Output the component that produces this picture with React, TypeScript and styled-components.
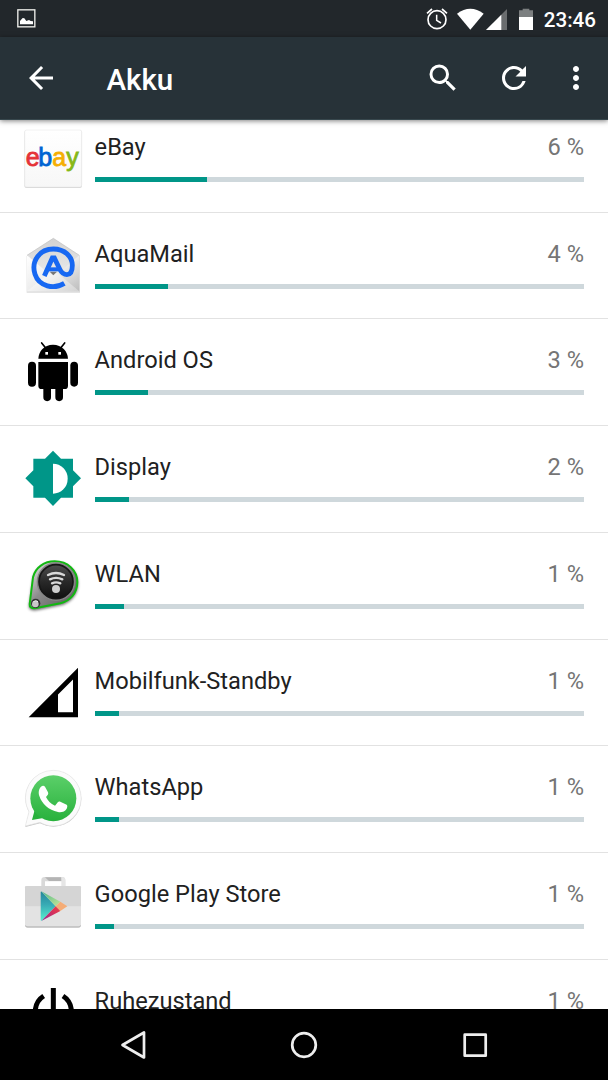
import type { ReactNode } from 'react';
import styled, { createGlobalStyle } from 'styled-components';
import { MdArrowBack, MdMoreVert, MdRefresh, MdSearch } from 'react-icons/md';

const GlobalStyle = createGlobalStyle`
  * {
    box-sizing: border-box;
  }
  body {
    margin: 0;
    background-color: #ffffff;
    font-family: Roboto, 'Liberation Sans', sans-serif;
  }
`;
const Container = styled.div`
  display: flex;
  flex-direction: column;
  width: 608px;
  height: 1080px;
  overflow: hidden;
  background-color: #ffffff;
`;
const StatusBar = styled.div`
  display: flex;
  align-items: center;
  flex-shrink: 0;
  height: 37px;
  padding: 0 12px 0 17px;
  background-color: #22272b;
  svg {
    display: block;
    flex-shrink: 0;
  }
`;
const StatusGroup = styled.div`
  display: flex;
  align-items: center;
  margin-left: auto;
`;
const AlarmIcon = styled.svg`
  width: 22px;
  height: 22px;
  margin-right: 9px;
`;
const Clock = styled.span`
  margin-left: 10px;
  padding-top: 2px;
  color: #ffffff;
  font-size: 20.6px;
  font-weight: 500;
  line-height: 24px;
`;
const AppBar = styled.header`
  position: relative;
  z-index: 1;
  display: flex;
  align-items: center;
  flex-shrink: 0;
  height: 83px;
  padding: 0 14.5px 0 23.4px;
  background-color: #273238;
  border-bottom: 1px solid #37474d;
  box-shadow: 0 1px 5px rgba(0, 0, 0, 0.5);
  color: #ffffff;
`;
const Title = styled.h1`
  flex: 1;
  margin: 3px 0 0 47.1px;
  font-size: 29.5px;
  font-weight: 500;
  line-height: 36px;
`;
const BarButton = styled.button<{ $space?: number }>`
  display: flex;
  align-items: center;
  justify-content: center;
  width: 36px;
  height: 36px;
  margin-left: ${(props) => props.$space || 0}px;
  padding: 0;
  border: 0;
  background: none;
  color: inherit;
  font-size: 36px;
`;
const List = styled.main`
  flex: 1;
  min-height: 0;
  overflow: hidden;
`;
const Rows = styled.ul`
  margin: -14.1px 0 0;
  padding: 0;
  list-style: none;
`;
const Row = styled.li`
  display: flex;
  align-items: center;
  gap: 12.6px;
  height: 106.75px;
  padding: 0 24px;
  border-bottom: 1px solid #e2e2e2;
`;
const AppIcon = styled.svg`
  display: block;
  flex-shrink: 0;
  width: 58px;
  height: 58px;
  overflow: visible;
`;
const Usage = styled.div`
  flex: 1;
  align-self: flex-start;
  padding-top: 27px;
`;
const UsageText = styled.div`
  display: flex;
  justify-content: space-between;
  height: 44px;
  font-size: 23.65px;
  line-height: 28px;
`;
const Name = styled.span`
  color: #212121;
`;
const Percent = styled.span`
  color: #757575;
`;
const Track = styled.div`
  height: 5px;
  background-color: #cfd8dc;
`;
const Fill = styled.div<{ $value: number }>`
  width: ${(props) => props.$value}%;
  height: 100%;
  background-color: #009688;
`;
const NavBar = styled.nav`
  display: flex;
  align-items: center;
  justify-content: center;
  gap: 141px;
  flex-shrink: 0;
  height: 71px;
  background-color: #000000;
`;
const NavIcon = styled.svg`
  display: block;
  width: 30px;
  height: 30px;
  fill: none;
  stroke: #eeeeee;
  stroke-width: 2.7;
  stroke-linejoin: round;
`;

const EbayIcon = () => (
  <AppIcon viewBox='42 30 174 174'>
    <defs>
      <linearGradient id='ebayBg' x1='0' y1='0' x2='0' y2='1'>
        <stop offset='0' stopColor='#ffffff' />
        <stop offset='1' stopColor='#f7f7f7' />
      </linearGradient>
    </defs>
    <rect x='43' y='31' width='173' height='173' rx='7' fill='#d4d4d4' />
    <rect x='44' y='30' width='171' height='171' rx='6' fill='url(#ebayBg)' stroke='#ececec' strokeWidth='2' />
    <text y='138' fontFamily='Liberation Sans, sans-serif' fontSize='75' strokeWidth='2.400'>
      <tspan x='47' fill='#e53238' stroke='#e53238'>e</tspan>
      <tspan x='85' fill='#0064d2' stroke='#0064d2'>b</tspan>
      <tspan x='127' fill='#f5af02' stroke='#f5af02'>a</tspan>
      <tspan x='169' fill='#86b817' stroke='#86b817'>y</tspan>
    </text>
  </AppIcon>
);

const AquaMailIcon = () => (
  <AppIcon viewBox='42 35 174 174'>
    <defs>
      <linearGradient id='aquaInside' x1='0' y1='0' x2='0' y2='1'>
        <stop offset='0' stopColor='#d2d2d2' />
        <stop offset='1' stopColor='#f4f4f4' />
      </linearGradient>
      <linearGradient id='aquaBody' x1='0' y1='0' x2='1' y2='1'>
        <stop offset='0' stopColor='#ffffff' />
        <stop offset='0.5' stopColor='#ededed' />
        <stop offset='1' stopColor='#bcbcbc' />
      </linearGradient>
    </defs>
    <path d='M50 92 130 40l80 52v110H50Z' fill='#cccccc' opacity='.7' />
    <path d='M51 90 130 39l78 51v108H51Z' fill='url(#aquaInside)' />
    <path d='M51 90l66 55q13 11 26 0l65-55v108H51Z' fill='url(#aquaBody)' />
    <path d='M51 198l66-54q13-9 26 0l65 54Z' fill='#ffffff' opacity='.35' />
    <path d='M119 139l11 11 11-11Z' fill='#777777' />
    <path d='M51 90 130 39l78 51' fill='none' stroke='#c3c3c3' strokeWidth='2' />
    <g fill='none' stroke='#1768f2' strokeWidth='14.500'>
      <path d='M163 174C132 193 87 184 75 147 62 105 91 71 130 71c34 0 57 23 57 49 0 17-5 28-16 28-10 0-16-5-22-17L133 98h-6l-24 54' />
      <path d='M109 132h40' strokeWidth='12' />
    </g>
  </AppIcon>
);

const AndroidIcon = () => (
  <AppIcon viewBox='42 40 174 174'>
    <path d='M85 87c1-22 17-42 44-42s44 20 45 42Z' />
    <path d='M95 40l12 15M164 40l-12 15' stroke='#000000' strokeWidth='5' strokeLinecap='round' />
    <rect x='106' y='67' width='8' height='8' fill='#ffffff' />
    <rect x='145' y='67' width='8' height='8' fill='#ffffff' />
    <path d='M85 97h89v71q0 10-10 10H95q-10 0-10-10Z' />
    <rect x='54' y='96' width='24' height='75' rx='12' />
    <rect x='181' y='96' width='23' height='75' rx='11.5' />
    <path d='M100 170h23v33a11.500 11.500 0 0 1-23 0ZM136 170h23v33a11.500 11.500 0 0 1-23 0Z' />
  </AppIcon>
);

const DisplayIcon = () => (
  <AppIcon viewBox='42 46 174 174'>
    <path
      d='M129 48l24 24h36v35l24 24-24 24v34h-36l-24 25-24-25H70v-34l-24-24 24-24V72h35Z'
      fill='#009688'
    />
    <path d='M129 87a44 45 0 0 1 0 90Z' fill='#ffffff' />
  </AppIcon>
);

const WlanIcon = () => (
  <AppIcon viewBox='42 36 174 174'>
    <defs>
      <linearGradient id='wlanMetal' x1='0' y1='0' x2='1' y2='1'>
        <stop offset='0' stopColor='#ededed' />
        <stop offset='0.45' stopColor='#8c8c8c' />
        <stop offset='1' stopColor='#555555' />
      </linearGradient>
      <linearGradient id='wlanDisc' x1='0' y1='0' x2='0' y2='1'>
        <stop offset='0' stopColor='#4d4d4d' />
        <stop offset='0.5' stopColor='#292929' />
        <stop offset='1' stopColor='#101010' />
      </linearGradient>
      <filter id='wlanShadow' x='-20%' y='-20%' width='140%' height='140%'>
        <feGaussianBlur stdDeviation='4' />
      </filter>
    </defs>
    <path
      d='M57 179L70 92C78 64 103 48 134 48c41 0 70 28 70 63 0 35-24 57-52 65l-73 15c-14 2-23-3-22-12Z'
      fill='#000000'
      opacity='.6'
      transform='translate(0 5)'
      filter='url(#wlanShadow)'
    />
    <path
      d='M59 177L69 97C76 67 103 49 134 49c40 0 68 28 68 62 0 35-23 56-51 64l-73 14c-14 2-20-3-19-12Z'
      fill='url(#wlanMetal)'
      stroke='#12b812'
      strokeWidth='6'
    />
    <circle cx='138' cy='110' r='58' fill='#858585' />
    <circle cx='138' cy='110' r='51' fill='url(#wlanDisc)' stroke='#161616' strokeWidth='5' />
    <g fill='none' stroke='#d9d9d9' strokeWidth='7' strokeLinecap='round'>
      <path d='M114 90q24-12 48 0M120 103q18-9 37 0M126 115q12-6 25 0' />
    </g>
    <circle cx='138' cy='132' r='12' fill='#cfcfcf' />
    <circle cx='77' cy='175' r='14' fill='#333333' />
    <circle cx='76' cy='177' r='10' fill='#c8c8c8' />
    <path d='M70 170q8-6 14 0' fill='none' stroke='#eeeeee' strokeWidth='3' />
  </AppIcon>
);

const MobileIcon = () => (
  <AppIcon viewBox='42 26.500 174 174'>
    <path d='M56 186 204 38v148ZM144 118v53h45V73Z' fillRule='evenodd' />
  </AppIcon>
);

const WhatsAppIcon = () => (
  <AppIcon viewBox='42 30 174 174'>
    <defs>
      <linearGradient id='waGreen' x1='0' y1='0' x2='0' y2='1'>
        <stop offset='0' stopColor='#5bcf69' />
        <stop offset='1' stopColor='#28b13c' />
      </linearGradient>
    </defs>
    <path
      d='M46 201l11-45A83 83 0 0 1 130 32a84 84 0 0 1 0 168c-14 0-28-4-40-10Z'
      fill='#c2c2c2'
    />
    <path
      d='M46 198l11-43A83 83 0 0 1 130 31a83 83 0 0 1 0 167c-14 0-28-4-40-11Z'
      fill='#fbfbfb'
      stroke='#e6e6e6'
      strokeWidth='2'
    />
    <path d='M66 180l8-30 26 24Z' fill='#28b13c' />
    <circle cx='130' cy='115' r='69' fill='url(#waGreen)' />
    <path
      d='M93 80c4-4 9-4 12 0l9 17c2 5 0 8-6 14 5 11 14 20 27 26l9-11c2-2 4-2 7-1l19 9c3 2 2 7 0 12-4 9-17 12-26 10-28-6-48-24-56-48-4-11-1-23 5-28Z'
      fill='#ffffff'
    />
  </AppIcon>
);

const PlayStoreIcon = () => (
  <AppIcon viewBox='42 37 174 174'>
    <defs>
      <linearGradient id='playBlue' x1='0' y1='0' x2='0' y2='1'>
        <stop offset='0' stopColor='#25869a' />
        <stop offset='0.45' stopColor='#38abb5' />
        <stop offset='1' stopColor='#59efcf' />
      </linearGradient>
      <linearGradient id='playGreen' x1='0' y1='0' x2='1' y2='1'>
        <stop offset='0' stopColor='#51b78c' />
        <stop offset='1' stopColor='#c3e695' />
      </linearGradient>
      <linearGradient id='playRed' x1='0' y1='1' x2='1' y2='0'>
        <stop offset='0' stopColor='#8d2c9b' />
        <stop offset='0.6' stopColor='#d5305c' />
        <stop offset='1' stopColor='#ed4343' />
      </linearGradient>
    </defs>
    <path d='M94 65V47q0-10 10-10h52q10 0 10 10v18h-11V50h-50v15Z' fill='#d9d9d9' />
    <path d='M105 38h49v11h-37Z' fill='#b4b4b4' />
    <path d='M154 37q12 0 12 10v18h-11V50Z' fill='#e6e6e6' />
    <path d='M45 69q0-5 5-5h158q5 0 5 5v113q0 7-8 7H53q-8 0-8-7Z' fill='#bdbdbd' />
    <path d='M45 69q0-5 5-5h158q5 0 5 5v110q0 6-8 6H53q-8 0-8-6Z' fill='#e3e3e3' />
    <path d='M45 69q0-5 5-5h158q5 0 5 5v56H45Z' fill='#d5d5d5' />
    <path d='M92 82v84q0 3 3 2l42-43-42-44q-3-1-3 1Z' fill='url(#playBlue)' />
    <path d='M94 80l43 45 14-14Z' fill='url(#playGreen)' />
    <path d='M151 111l21 14-21 14-14-14Z' fill='#f5ac76' />
    <path d='M94 169l43-44 14 14Z' fill='url(#playRed)' />
  </AppIcon>
);

const PowerIcon = () => (
  <AppIcon viewBox='72 102 174 174'>
    <path
      d='M160 114v76M131 138a54 54 0 1 0 58 0'
      fill='none'
      stroke='#000000'
      strokeWidth='15'
    />
  </AppIcon>
);

interface Consumer {
  name: string;
  percent: number;
  fill: number;
  icon: ReactNode;
}

const consumers: Consumer[] = [
  { name: 'eBay', percent: 6, fill: 23, icon: <EbayIcon /> },
  { name: 'AquaMail', percent: 4, fill: 15, icon: <AquaMailIcon /> },
  { name: 'Android OS', percent: 3, fill: 11, icon: <AndroidIcon /> },
  { name: 'Display', percent: 2, fill: 7, icon: <DisplayIcon /> },
  { name: 'WLAN', percent: 1, fill: 6, icon: <WlanIcon /> },
  { name: 'Mobilfunk-Standby', percent: 1, fill: 5, icon: <MobileIcon /> },
  { name: 'WhatsApp', percent: 1, fill: 5, icon: <WhatsAppIcon /> },
  { name: 'Google Play Store', percent: 1, fill: 4, icon: <PlayStoreIcon /> },
  { name: 'Ruhezustand', percent: 1, fill: 4, icon: <PowerIcon /> },
];

const StatusIcons = () => (
  <StatusBar>
    <svg width='19' height='19' viewBox='0 0 57 57'>
      <rect x='2.500' y='2.500' width='51' height='51' fill='none' stroke='#f0f0ec' strokeWidth='4' />
      <path d='M9 46V36l8-9 5 1 6 8 8-3 5 3 7 1v9Z' fill='#ffffff' />
    </svg>
    <StatusGroup>
      <AlarmIcon viewBox='77 23 66 66' fill='none' stroke='#ffffff'>
        <circle cx='110' cy='58' r='27' strokeWidth='5' />
        <path d='M109 43v17l13 8' strokeWidth='4.500' />
        <path d='M80 39l15-13M140 39l-15-13' strokeWidth='5' />
      </AlarmIcon>
      {/* wifi */}
      <svg width='28' height='22' viewBox='170 21 84 66'>
        <path d='M170 38q40-29 80 0l-40 48Z' fill='#ffffff' />
      </svg>
      {/* mobile signal */}
      <svg width='23' height='22' viewBox='254 21 69 66'>
        <path d='M320 24v63h-63Z' fill='#6a6d6f' />
        <path d='M303 41v46h-46Z' fill='#ffffff' />
      </svg>
      {/* battery */}
      <svg width='26' height='22' viewBox='324 21 78 66'>
        <path d='M357 28h11v-5h20v5h11v20h-42Z' fill='#7c7f80' />
        <path d='M357 48h42v39h-42Z' fill='#ffffff' />
      </svg>
      <Clock>23:46</Clock>
    </StatusGroup>
  </StatusBar>
);

const App = () => {
  return (
    <>
      <GlobalStyle />
      <Container>
        <StatusIcons />
        <AppBar>
          <BarButton aria-label='Zurück'>
            <MdArrowBack />
          </BarButton>
          <Title>Akku</Title>
          <BarButton aria-label='Suchen'>
            <MdSearch />
          </BarButton>
          <BarButton aria-label='Aktualisieren' $space={35}>
            <MdRefresh />
          </BarButton>
          <BarButton aria-label='Mehr' $space={26}>
            <MdMoreVert />
          </BarButton>
        </AppBar>
        <List>
          <Rows>
            {consumers.map((item) => (
              <Row key={item.name}>
                {item.icon}
                <Usage>
                  <UsageText>
                    <Name>{item.name}</Name>
                    <Percent>{item.percent} %</Percent>
                  </UsageText>
                  <Track>
                    <Fill $value={item.fill} />
                  </Track>
                </Usage>
              </Row>
            ))}
          </Rows>
        </List>
        <NavBar>
          <NavIcon viewBox='0 0 30 30'>
            <path d='M4.500 15 26 2.500v25Z' />
          </NavIcon>
          <NavIcon viewBox='0 0 30 30'>
            <circle cx='15' cy='15' r='11.800' />
          </NavIcon>
          <NavIcon viewBox='0 0 30 30'>
            <rect x='4.700' y='4.700' width='21' height='21' />
          </NavIcon>
        </NavBar>
      </Container>
    </>
  );
};

export default App;
